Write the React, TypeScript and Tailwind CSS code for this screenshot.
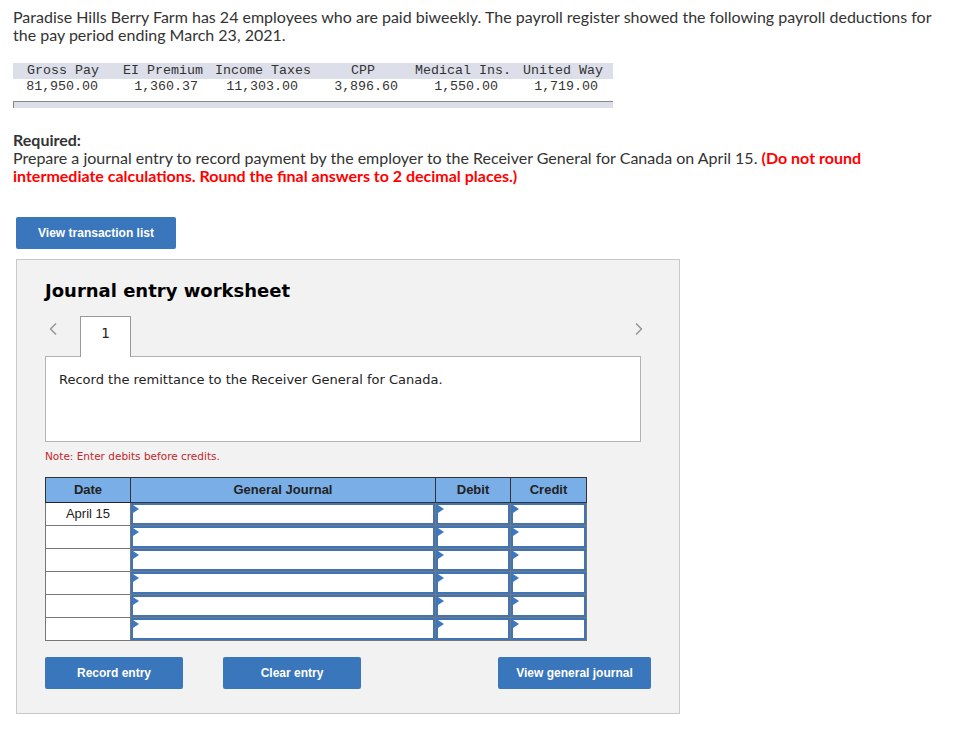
import { ChevronLeft, ChevronRight } from 'lucide-react';

const payroll = [
  ['Gross Pay', '81,950.00'],
  ['EI Premium', '1,360.37'],
  ['Income Taxes', '11,303.00'],
  ['CPP', '3,896.60'],
  ['Medical Ins.', '1,550.00'],
  ['United Way', '1,719.00'],
];

const rows = ['April 15', '', '', '', '', ''];

const Flag = () => (
  <span className="absolute left-0 top-0 w-0 h-0 border-y-[4px] border-y-transparent border-l-[6px] border-l-[#3d78c0]" />
);

const InputCell = () => (
  <td className="border border-[#777] p-0 h-[23px]">
    <div className="relative h-[22px] border-2 border-[#3f74b6] bg-white">
      <Flag />
    </div>
  </td>
);

const Btn = ({ label, w }: { label: string; w: string }) => (
  <button
    className={`${w} h-8 rounded-[2px] bg-[#3a76bb] text-white text-[12px] font-bold font-['Liberation_Sans',Arial,sans-serif]`}
  >
    {label}
  </button>
);

export default function App() {
  return (
    <div className="w-[975px] min-h-[731px] bg-white font-['Lato',sans-serif] text-[#333] pt-2">
      {/* Вопрос */}
      <p className="ml-[13px] w-[925px] text-[16px] leading-[18px]">
        Paradise Hills Berry Farm has 24 employees who are paid biweekly. The payroll register showed
        the following payroll deductions for the pay period ending March 23, 2021.
      </p>

      <div className="ml-[13px] mt-[19px] w-[600px]">
        <table className="border-collapse font-['Liberation_Mono',monospace] text-[13.3px] leading-[16px] text-[#333]">
          <thead>
            <tr className="bg-[#dcdfe9]">
              {payroll.map(([h]) => (
                <th key={h} className="w-[100px] font-normal text-center whitespace-nowrap">
                  {h}
                </th>
              ))}
            </tr>
          </thead>
          <tbody>
            <tr>
              {payroll.map(([h, v]) => (
                <td key={h} className="text-right pr-[15px] whitespace-nowrap">
                  {v}
                </td>
              ))}
            </tr>
          </tbody>
        </table>
        <div className="mt-[6px] h-[7px] bg-[#dcdfe9] border-t border-l border-[#888]" />
      </div>

      {/* Задание */}
      <div className="ml-[13px] w-[925px] mt-[23px] text-[16px] leading-[18px]">
        <p className="font-bold">Required:</p>
        <p>
          Prepare a journal entry to record payment by the employer to the Receiver General for
          Canada on April 15.{' '}
          <span className="font-bold text-[#ff0000]">
            (Do not round intermediate calculations. Round the final answers to 2 decimal places.)
          </span>
        </p>
      </div>

      <div className="ml-4 mt-[32px]">
        <Btn label="View transaction list" w="w-[160px]" />
      </div>

      {/* Рабочий лист */}
      <div className="ml-4 mt-[10px] w-[664px] bg-[#f2f2f2] border border-[#c8c8c8] pl-[28px] pr-[28px] pt-[19px] pb-[24px]">
        <h2 className="font-['DejaVu_Sans',Verdana,sans-serif] font-bold text-[18px] leading-6 text-black">
          Journal entry worksheet
        </h2>

        <div className="mt-[13px] flex items-end relative">
          <ChevronLeft className="absolute left-[-2px] top-[3px] w-5 h-5 text-[#999]" strokeWidth={2} />
          <div className="ml-[35px] w-[51px] h-[41px] bg-white border border-b-0 border-[#999] text-center pt-[6px] font-['DejaVu_Sans',Verdana,sans-serif] text-[13.5px] text-[#222] relative z-10 -mb-px">
            1
          </div>
          <ChevronRight className="absolute right-[2px] top-[3px] w-5 h-5 text-[#999]" strokeWidth={2} />
        </div>
        <div className="w-[596px] h-[86px] bg-white border border-[#b3b3b3] px-[13px] pt-[13px] font-['DejaVu_Sans',Verdana,sans-serif] text-[13px] text-[#222]">
          Record the remittance to the Receiver General for Canada.
        </div>

        <p className="mt-[7px] font-['DejaVu_Sans',Verdana,sans-serif] text-[10.5px] leading-[14px] text-[#c1272d]">
          Note: Enter debits before credits.
        </p>

        <table className="mt-[14px] border-collapse border border-[#777] font-['Liberation_Sans',Arial,sans-serif] text-[13px] text-[#222]">
          <thead>
            <tr className="h-[25px] bg-[#7aaee6]">
              <th className="w-[85px] border border-[#333] border-b-[#222] font-bold">Date</th>
              <th className="w-[305px] border border-[#333] font-bold">General Journal</th>
              <th className="w-[75px] border border-[#333] font-bold">Debit</th>
              <th className="w-[76px] border border-[#333] font-bold">Credit</th>
            </tr>
          </thead>
          <tbody>
            {rows.map((d, i) => (
              <tr key={i} className="bg-white">
                <td className="border border-[#777] h-[23px] text-center p-0">{d}</td>
                <InputCell />
                <InputCell />
                <InputCell />
              </tr>
            ))}
          </tbody>
        </table>

        <div className="mt-4 flex">
          <Btn label="Record entry" w="w-[138px]" />
          <div className="ml-10">
            <Btn label="Clear entry" w="w-[138px]" />
          </div>
          <div className="ml-auto">
            <Btn label="View general journal" w="w-[153px]" />
          </div>
        </div>
      </div>
    </div>
  );
}
